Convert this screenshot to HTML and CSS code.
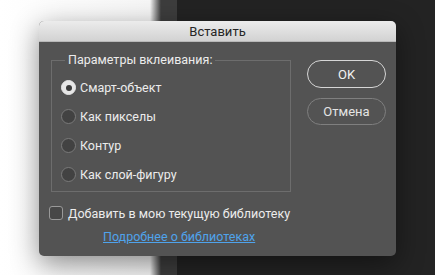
FILE: index.html
```html
<!DOCTYPE html>
<html lang="ru">
  <head>
    <meta charset="UTF-8" />
    <title>Вставить</title>
    <link rel="stylesheet" href="styles.css">
  </head>
  <body>
    <div class="dialog">
      <div class="titlebar">Вставить</div>
      <div class="content">
        <div class="main">
          <fieldset class="group">
            <legend>Параметры вклеивания:</legend>
            <label class="radio-row">
              <span class="radio checked"></span>
              <span>Смарт-объект</span>
            </label>
            <label class="radio-row">
              <span class="radio"></span>
              <span>Как пикселы</span>
            </label>
            <label class="radio-row">
              <span class="radio"></span>
              <span>Контур</span>
            </label>
            <label class="radio-row">
              <span class="radio"></span>
              <span>Как слой-фигуру</span>
            </label>
          </fieldset>
          <div class="buttons">
            <button class="btn btn-ok">OK</button>
            <button class="btn btn-cancel">Отмена</button>
          </div>
        </div>
        <label class="check-row">
          <span class="checkbox"></span>
          <span>Добавить в мою текущую библиотеку</span>
        </label>
        <a class="more" href="#">Подробнее о библиотеках</a>
      </div>
    </div>
  </body>
</html>
```

FILE: styles.css
```css
* {
  box-sizing: border-box;
}

html,
body {
  margin: 0;
  height: 100%;
}

body {
  font-family: Roboto, "Liberation Sans", sans-serif;
  font-size: 12.5px;
  background: linear-gradient(
    to right,
    #ffffff 0,
    #f6f6f6 150px,
    #3d3d3d 161px,
    #3d3d3d 177px,
    #232323 177px
  );
  padding: 21px 0 0 39px;
  overflow: hidden;
}

.dialog {
  width: 357px;
  border-radius: 5px;
  background-color: #535353;
  box-shadow: 0 8px 28px rgba(0, 0, 0, 0.45);
  color: #ececec;
}

.titlebar {
  height: 21px;
  line-height: 21px;
  font-size: 13px;
  text-align: center;
  color: #262626;
  border-radius: 5px 5px 0 0;
  background: linear-gradient(#ececec, #d2d2d2);
  border-bottom: 1px solid #b8b8b8;
}

.content {
  padding: 11px 10px 11px 12px;
}

.main {
  display: flex;
  justify-content: space-between;
  align-items: flex-start;
}

.group {
  margin: 0;
  width: 240px;
  height: 139px;
  padding: 6px 0 0 9px;
  border: 1px solid #6d6d6d;
}

.group legend {
  padding: 0 3px;
  margin-left: 4px;
  line-height: 14px;
}

.radio-row {
  display: flex;
  align-items: center;
  gap: 4px;
  height: 29px;
}

.radio {
  flex-shrink: 0;
  width: 15px;
  height: 15px;
  border-radius: 50%;
  border: 1px solid #7a7a7a;
  background-color: #424242;
  display: flex;
  justify-content: center;
  align-items: center;
}

.radio.checked {
  background-color: #e6e6e6;
  border-color: #e6e6e6;
}

.radio.checked::after {
  content: "";
  width: 6px;
  height: 6px;
  border-radius: 50%;
  background-color: #3a3a3a;
}

.buttons {
  display: flex;
  flex-direction: column;
  gap: 10px;
  margin-top: 7px;
}

.btn {
  width: 79px;
  height: 28px;
  border-radius: 14px;
  background-color: #535353;
  font-family: inherit;
  font-size: 13px;
  padding: 0;
}

.btn-ok {
  border: 1px solid #d6d6d6;
  color: #f2f2f2;
}

.btn-cancel {
  height: 27px;
  border: 1px solid #7f7f7f;
  color: #e4e4e4;
}

.check-row {
  display: flex;
  align-items: center;
  gap: 5px;
  margin-top: 11px;
  margin-left: -2px;
  height: 20px;
}

.checkbox {
  flex-shrink: 0;
  width: 14px;
  height: 14px;
  border-radius: 3px;
  border: 1px solid #999999;
  background-color: #474747;
}

.more {
  display: block;
  margin: 6px 0 0 52px;
  color: #4fa3ec;
  line-height: 16px;
}
```
